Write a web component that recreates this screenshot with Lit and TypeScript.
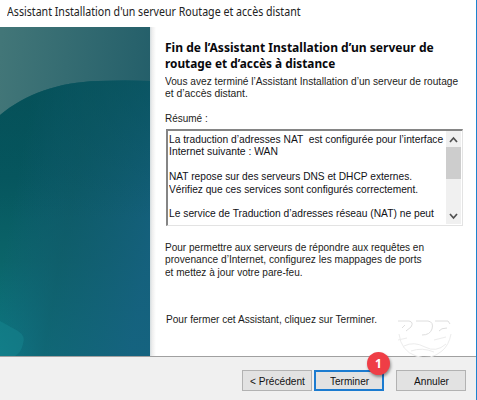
import { LitElement, html, css, svg } from "lit";
import { customElement, property } from "lit/decorators.js";

/** One line of dialog text, condensed so that it spans the given width. */
@customElement("text-line")
class TextLine extends LitElement {
  @property({ type: Number }) span = 0;
  @property() text = "";
  static styles = css`
    :host { display: block; height: var(--line, 12.4px); line-height: var(--line, 12.4px); white-space: pre; }
    .run { display: inline-block; transform-origin: 0 50%; }
  `;
  render() {
    return html`<span class="run">${this.text}</span>`;
  }
  updated() {
    const run = this.renderRoot.querySelector(".run") as HTMLElement;
    const natural = run.offsetWidth;
    if (!natural) return;
    run.style.transform = `scaleX(${this.span / natural})`;
    this.style.width = `${this.span}px`;
  }
}

const line = (text: string, span: number) =>
  html`<text-line .text=${text} .span=${span}></text-line>`;

@customElement("app-root")
class AppRoot extends LitElement {
  static styles = css`
    :host { display: block; }
    * { box-sizing: border-box; }
    .window {
      position: relative; width: 477px; height: 400px; overflow: hidden;
      display: grid; grid-template-rows: 27px 329px 44px;
      background: #fff; border-right: 1px solid #1c83cf;
      font: 11.6px "Liberation Sans", Arial, sans-serif; color: #1c1c20;
    }
    .title {
      --line: 17px; padding: 3px 0 0 7px;
      font: 12px "Noto Sans", "Open Sans", sans-serif; color: #222;
    }
    .main { display: grid; grid-template-columns: 150px 6px 1fr; }
    .art { display: block; }
    .shade { background: linear-gradient(90deg, #d3dcdf, #eee 35%, #fff); }
    .content { padding: 12px 0 0 9px; }
    .heading {
      --line: 16px; height: 36px;
      font: bold 12.7px "Noto Sans", "Open Sans", sans-serif; color: #08080c;
    }
    .intro { height: 37px; }
    .label { height: 17px; }
    .box {
      display: flex; justify-content: space-between; width: 297px; height: 97px; margin-left: 1px;
      border: 1px solid #e3e3e3; border-top: 2px solid #858585; border-left: 2px solid #858585;
    }
    .summary { padding: 2px 0 0 1px; color: #111116; }
    .bar { width: 15px; height: 93px; background: #f0f0f0; display: flex; flex-direction: column; margin-right: 1px; }
    .thumb { height: 32px; background: #cdcdcd; }
    .gap { flex: 1; }
    .arrow { display: block; width: 15px; height: 16px; }
    .note { padding-top: 15px; height: 87px; }
    .close { padding-left: 1px; }
    .footer {
      background: #f0f0f0; border-top: 1px solid #a0a0a0;
      display: flex; align-items: flex-start; padding: 13px 0 0 242px; color: #111;
    }
    .button {
      display: flex; align-items: center; justify-content: center;
      width: 70px; height: 21px; --line: 19px; background: #e2e2e2; border: 1px solid #b2b2b2;
    }
    .primary { margin: 0 12px 0 2px; border: 2px solid #1b7bd0; }
    .badge {
      position: absolute; left: 367px; top: 352px; width: 23px; height: 23px; border-radius: 50%;
      background: #ef3e46; box-shadow: 1px 2px 3px #0006; color: #fff;
      display: flex; align-items: center; justify-content: center;
      font: bold 12px "Noto Sans", sans-serif;
    }
    .mark { position: absolute; left: 392px; top: 314px; }
  `;

  private art = html`
    <svg class="art" width="150" height="329" viewBox="0 0 150 329">
      <defs>
        <linearGradient id="sky" x1="0" y1=".1" x2="1" y2=".25">
          <stop offset="0" stop-color="#427678" /><stop offset="1" stop-color="#245f6a" />
        </linearGradient>
        <linearGradient id="sea" x1="0" y1="54" x2="0" y2="329" gradientUnits="userSpaceOnUse">
          <stop offset="0" stop-color="#045159" /><stop offset=".35" stop-color="#06575f" />
          <stop offset=".65" stop-color="#0b6469" /><stop offset="1" stop-color="#0d7a83" />
        </linearGradient>
        <linearGradient id="blue" x1="10" y1="190" x2="150" y2="215" gradientUnits="userSpaceOnUse">
          <stop offset="0" stop-color="#165e7c" stop-opacity="0" /><stop offset=".4" stop-color="#125b6d" stop-opacity=".6" />
          <stop offset="1" stop-color="#16607f" stop-opacity=".88" />
        </linearGradient>
        <linearGradient id="edge" x1="0" y1="0" x2="0" y2="1">
          <stop offset="0" stop-color="#065159" stop-opacity=".6" /><stop offset=".5" stop-color="#065159" stop-opacity="0" />
        </linearGradient>
      </defs>
      <rect width="150" height="329" fill="url(#sky)" />
      <path d="M0 88C25 67 59 55 98 54Q125 53 150 54V329H0Z" fill="url(#sea)" />
      <path d="M0 88C25 67 59 55 98 54Q125 53 150 54V329H0Z" fill="url(#blue)" />
      <path d="M0 88C25 67 59 55 98 54Q125 53 150 54V329H0Z" fill="url(#edge)" />
      <path d="M0 294L18 304Q26 309 23 317Q21 326 15 329H0Z" fill="#158590" opacity=".5" />
    </svg>`;

  private arrow(d: string) {
    return html`<svg class="arrow" viewBox="0 0 15 16">${svg`<path d=${d} fill="none" stroke="#505050" stroke-width="1.7" />`}</svg>`;
  }

  render() {
    return html`
      <div class="window">
        <div class="title">${line("Assistant Installation d'un serveur Routage et accès distant", 294)}</div>
        <div class="main">
          ${this.art}
          <div class="shade"></div>
          <div class="content">
            <div class="heading">
              ${line("Fin de l’Assistant Installation d’un serveur de", 269)}
              ${line("routage et d’accès à distance", 170.5)}
            </div>
            <div class="intro">
              ${line("Vous avez terminé l’Assistant Installation d’un serveur de routage", 293)}
              ${line("et d’accès distant.", 83)}
            </div>
            <div class="label">${line("Résumé :", 43)}</div>
            <div class="box">
              <div class="summary">
                ${line("La traduction d’adresses NAT  est configurée pour l’interface", 274)}
                ${line("Internet suivante : WAN", 109)}
                ${line("", 3)}
                ${line("NAT repose sur des serveurs DNS et DHCP externes.", 243)}
                ${line("Vérifiez que ces services sont configurés correctement.", 249)}
                ${line("", 3)}
                ${line("Le service de Traduction d’adresses réseau (NAT) ne peut", 264.5)}
              </div>
              <div class="bar">
                ${this.arrow("M4 11L7.5 7L11 11")}
                <div class="thumb"></div>
                <div class="gap"></div>
                ${this.arrow("M4 6L7.5 10L11 6")}
              </div>
            </div>
            <div class="note">
              ${line("Pour permettre aux serveurs de répondre aux requêtes en", 259)}
              ${line("provenance d’Internet, configurez les mappages de ports", 257)}
              ${line("et mettez à jour votre pare-feu.", 138)}
            </div>
            <div class="close">${line("Pour fermer cet Assistant, cliquez sur Terminer.", 211)}</div>
          </div>
        </div>
        <div class="footer">
          <div class="button">${line("< Précédent", 55)}</div>
          <div class="button primary">${line("Terminer", 39)}</div>
          <div class="button">${line("Annuler", 35)}</div>
        </div>
        <svg class="mark" width="64" height="48" viewBox="0 0 64 48" fill="none" stroke="#dedede" stroke-width="1">
          <path d="M6 7H17Q22 8 19 13L14 17M24 7H36Q42 8 40 15Q38 21 30 21M43 7H56L58 10M47 17Q49 14 55 14M10 14L13 11" />
          <path d="M7 20Q9 37 24 42Q38 47 50 37Q57 31 59 20M12 32Q22 27 33 33T54 30M19 37Q30 33 42 38M6 26L15 24M42 26L54 23" stroke="#ececec" />
        </svg>
        <div class="badge">1</div>
      </div>
    `;
  }
}
